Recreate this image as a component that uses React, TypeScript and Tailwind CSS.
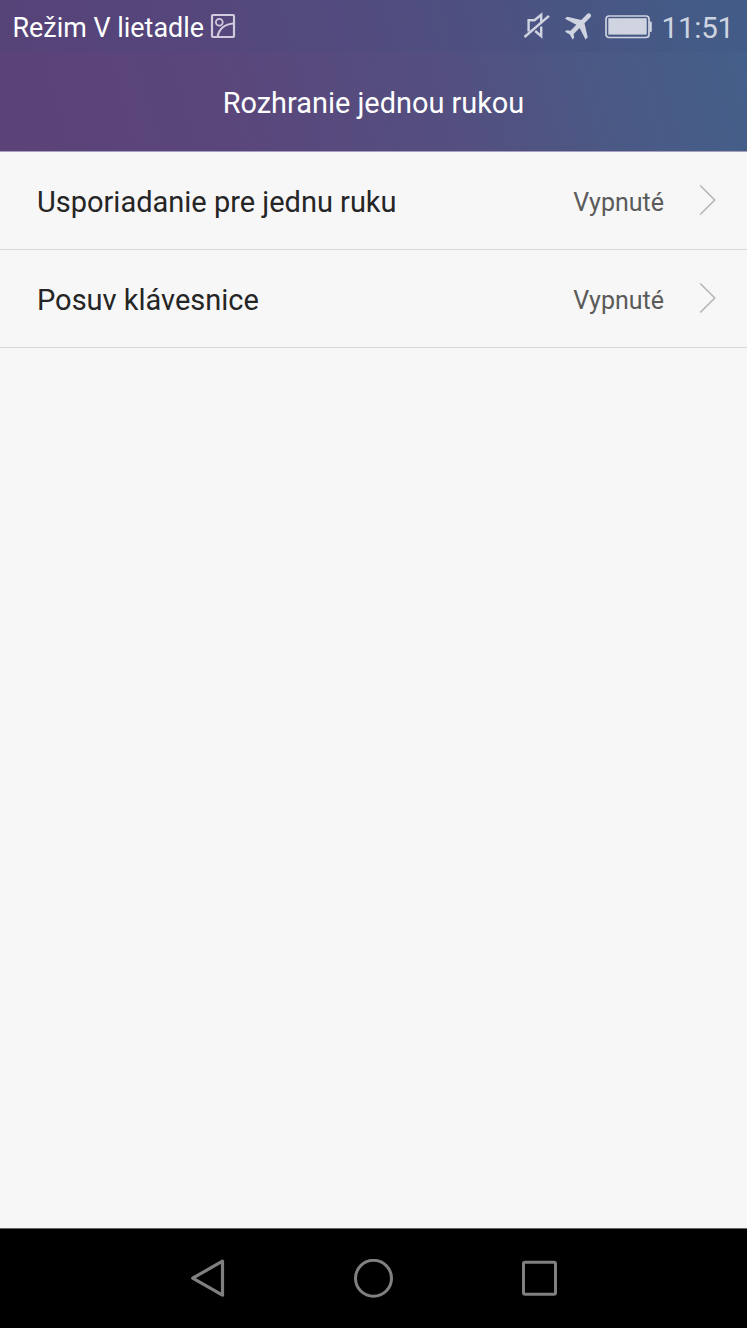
const settings = [
    {
        name: 'Usporiadanie pre jednu ruku',
        value: 'Vypnuté',
    },
    {
        name: 'Posuv klávesnice',
        value: 'Vypnuté',
    },
]

function GalleryIcon() {
    return (
        <svg width="26" height="26" viewBox="0 0 26 26" fill="none" stroke="currentColor" strokeWidth="2.2">
            <rect x="2" y="2" width="22" height="22" rx="1" />
            <circle cx="9.3" cy="9.2" r="3.4" strokeWidth="1.8" />
            <path d="M7.5 24C9 16 14 11 24 10.5" />
        </svg>
    )
}

function MuteIcon() {
    return (
        <svg width="28" height="28" viewBox="0 0 28 28" fill="none" stroke="currentColor" strokeWidth="2.4">
            <path d="M5.6 19.5V8.2H11.5L18.2 2.8V10" />
            <path d="M12.2 19L18.2 24.2V14.5" />
            <path d="M1.5 25L26 3.8" strokeWidth="2.4" />
        </svg>
    )
}

function PlaneIcon() {
    return (
        <svg width="28" height="28" viewBox="0 0 28 28" fill="currentColor">
            <path
                transform="translate(15.6 12.8) rotate(45) scale(1.53) translate(-11.5 -12)"
                d="M21 16v-2l-8-5V3.5c0-.83-.67-1.5-1.5-1.5S10 2.67 10 3.5V9l-8 5v2l8-2.5V19l-2 1.5V22l3.5-1 3.5 1v-1.5L13 19v-5.5l8 2.5z"
            />
        </svg>
    )
}

function BatteryIcon() {
    return (
        <svg width="48" height="24" viewBox="0 0 48 24" fill="currentColor">
            <rect x="1" y="1" width="43" height="21.5" rx="3" fill="none" stroke="currentColor" strokeWidth="1.7" />
            <rect x="3.3" y="3.2" width="38.4" height="16.4" />
            <path d="M44.5 6.5h1q1.3 0 1.3 1.3v8q0 1.3-1.3 1.3h-1z" />
        </svg>
    )
}

export default function App() {
    return (
        <div className="flex h-[1328px] w-[747px] flex-col overflow-hidden bg-[#f7f7f7] font-['Roboto',sans-serif]">
            {/* Header */}
            <header className="h-[152px] border-b border-[#a69fbd] bg-[linear-gradient(75deg,#5b4277_0%,#5a467b_30%,#544f80_58%,#4a5985_80%,#43608a_100%)]">
                <div className="flex h-[52px] items-center justify-between bg-[#3b4a80]/15 pr-[15px] pl-[12.5px]">
                    <div className="flex items-center text-white">
                        <span className="mt-[3px] text-[26.9px] leading-8 whitespace-nowrap">Režim V lietadle</span>
                        <span className="ml-[6.5px] text-[#cfcbdc]"><GalleryIcon /></span>
                    </div>
                    <div className="flex items-center text-[#d0d4e1]">
                        <MuteIcon />
                        <span className="ml-[13px]"><PlaneIcon /></span>
                        <span className="mt-[2px] ml-[13px]"><BatteryIcon /></span>
                        <span className="mt-[3px] -mr-[2px] ml-[9px] text-[29.5px] leading-8 tracking-[-0.2px]">11:51</span>
                    </div>
                </div>
                <h1 className="flex h-[100px] items-center justify-center pt-[3px] text-[28.9px] text-white">
                    Rozhranie jednou rukou
                </h1>
            </header>

            {/* Settings */}
            <main className="flex-1">
                {settings.map((item) => (
                    <div key={item.name} className="flex h-[98px] items-center border-b border-[#d9d9d9] pr-[30px] pl-[37px]">
                        <span className="flex-1 pt-[4px] text-[29px] tracking-[-0.01px] text-[#252525]">{item.name}</span>
                        <span className="pt-[4px] text-[25px] text-[#5b5b5b]">{item.value}</span>
                        <svg className="mb-[1px] ml-[35px]" width="18" height="32" viewBox="0 0 18 32" fill="none" stroke="#b3b3b3" strokeWidth="1.5">
                            <path d="M1.2 1.5L15.8 16L1.2 30.5" />
                        </svg>
                    </div>
                ))}
            </main>

            {/* Navigation bar */}
            <nav className="flex h-[100px] items-center border-t border-[#666] bg-black pl-[190px]">
                <svg width="36" height="40" viewBox="0 0 36 40" fill="none" stroke="#808080" strokeWidth="3.2" strokeLinejoin="round">
                    <path d="M32.5 2.2V36.2L2.7 19.2Z" />
                </svg>
                <svg className="ml-[127px]" width="40" height="40" viewBox="0 0 40 40" fill="none" stroke="#808080" strokeWidth="3">
                    <circle cx="20.5" cy="19.3" r="18" />
                </svg>
                <svg className="ml-[127px]" width="40" height="40" viewBox="0 0 40 40" fill="none" stroke="#808080" strokeWidth="3">
                    <rect x="3.5" y="3.2" width="32" height="32" rx="1.5" />
                </svg>
            </nav>
        </div>
    )
}
